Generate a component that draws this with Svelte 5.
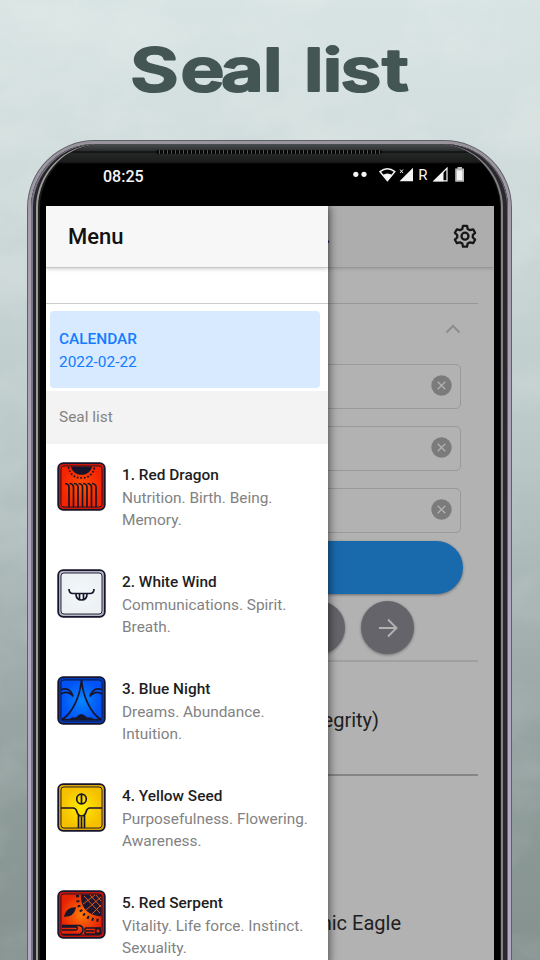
<script>
  const seals = [
    { kind: 'dragon', name: '1. Red Dragon', lines: ['Nutrition. Birth. Being.', 'Memory.'] },
    { kind: 'wind', name: '2. White Wind', lines: ['Communications. Spirit.', 'Breath.'] },
    { kind: 'night', name: '3. Blue Night', lines: ['Dreams. Abundance.', 'Intuition.'] },
    { kind: 'seed', name: '4. Yellow Seed', lines: ['Purposefulness. Flowering.', 'Awareness.'] },
    { kind: 'serpent', name: '5. Red Serpent', lines: ['Vitality. Life force. Instinct.', 'Sexuality.'] }
  ];
  const fields = [1, 2, 3];
  const tines = [10, 14.5, 19, 23.5, 28, 32.5, 37];
</script>

<div class="stage">
  <svg class="sky" width="540" height="960" aria-hidden="true">
    <filter id="cloud" x="0" y="0" width="100%" height="100%">
      <feTurbulence type="fractalNoise" baseFrequency="0.012 0.016" numOctaves="4" seed="8" />
      <feColorMatrix values="0 0 0 0 1  0 0 0 0 1  0 0 0 0 1  1.3 0 0 0 -0.52" />
    </filter>
    <rect width="540" height="960" filter="url(#cloud)" opacity="0.25" />
  </svg>

  <header class="title">
    <svg width="320" height="90" viewBox="0 0 320 90">
      <text transform="scale(1.26 1)" x="4.2 44 76.2 109.5 125 142 157 171 204.2" y="55">Seal list</text>
    </svg>
  </header>

  <div class="phone">
    <div class="bezel">
      <div class="inner">
        <div class="speaker"></div>
        <div class="status">
          <span class="clock">08:25</span>
          <svg width="120" height="20" viewBox="350 165 120 20" fill="#f4f4f4">
            <circle cx="355.800" cy="174.300" r="2.600" /><circle cx="364" cy="174.300" r="2.600" />
            <path d="M380 171.700Q387.400 165.700 394.800 171.700L387.400 180.500Z" fill="none" stroke="#f4f4f4" stroke-width="1.500" />
            <path d="M382.600 175Q387.400 171.800 392.200 175L387.400 181Z" />
            <path d="M399.500 181.200L413 167.800V181.200Z" /><path d="M400 169.500l3 3.500m0-3.500l-3 3.500" stroke="#f4f4f4" stroke-width="1" />
            <text x="418.300" y="180" class="roam">R</text>
            <path d="M434 180.900L447 168.200V180.900Z" fill="none" stroke="#f4f4f4" stroke-width="1.200" /><path d="M433.500 181.200L443.500 171.400V181.200Z" />
            <path d="M457.500 167h4.500v1.500h2v13.200h-8.800v-13.200h2.300z" fill="#bbb" /><rect x="457" y="170.500" width="5.200" height="9.500" />
          </svg>
        </div>

        <div class="screen">
          <main class="page">
            <div class="toolbar">
              <span class="name">.</span>
              <svg width="24" height="24" viewBox="0 0 24 24" fill="none" stroke="#171717" stroke-width="2.300" stroke-linejoin="round">
                <path d="M10 1.800h4l.7 3.100 2.300 1.300 3.100-.9 2 3.500-2.300 2.200v2.500l2.300 2.200-2 3.500-3.100-.9-2.300 1.300-.7 3.100h-4l-.7-3.100L7 18.300l-3.100.9-2-3.500 2.300-2.200V11L1.900 8.800l2-3.500 3.100.9 2.300-1.300z" />
                <circle cx="12" cy="12.200" r="3.500" />
              </svg>
            </div>
            <div class="body">
              <div class="accordion">
                <svg width="16" height="10" viewBox="0 0 16 10"><path d="M1.500 8.500L8 2l6.500 6.500" fill="none" stroke="#8d8d8d" stroke-width="2" /></svg>
              </div>
              {#each fields as f (f)}
                <div class="field">
                  <svg width="21" height="21" viewBox="0 0 21 21"><circle cx="10.500" cy="10.500" r="10.200" fill="#7b7b7b" /><path d="M6.700 6.700l7.600 7.600m0-7.600l-7.600 7.600" stroke="#b2b2b2" stroke-width="1.300" /></svg>
                </div>
              {/each}
              <div class="primary"></div>
              <div class="rounds">
                <div class="round"></div>
                <div class="round">
                  <svg width="20" height="20" viewBox="0 0 20 20" fill="none" stroke="#b2b2b2" stroke-width="1.900"><path d="M1 10h17M10 1.500l8.500 8.500-8.500 8.500" /></svg>
                </div>
              </div>
              <div class="result">tegrity)</div>
              <div class="eagle">mic Eagle</div>
            </div>
          </main>

          <nav class="drawer">
            <div class="menu-head">Menu</div>
            <div class="spacer"></div>
            <div class="calendar"><b>CALENDAR</b><span>2022-02-22</span></div>
            <div class="divider">Seal list</div>
            <ul>
              {#each seals as seal (seal.kind)}
                <li>
                  <svg class="seal" width="49" height="49" viewBox="0 0 49 49" fill="none" stroke="#17152c" stroke-width="1.700">
                    <defs>
                      <radialGradient id="g-{seal.kind}">
                        {#if seal.kind === 'wind'}
                          <stop offset="0" stop-color="#f3f8fa" /><stop offset="1" stop-color="#edf1f4" />
                        {:else if seal.kind === 'night'}
                          <stop offset="0" stop-color="#0786ff" /><stop offset="1" stop-color="#0052f4" />
                        {:else if seal.kind === 'seed'}
                          <stop offset="0" stop-color="#ffec00" /><stop offset="1" stop-color="#f5c000" />
                        {:else if seal.kind === 'serpent'}
                          <stop offset="0" stop-color="#ff7a08" /><stop offset="1" stop-color="#e62405" />
                        {:else}
                          <stop offset="0" stop-color="#ff5200" /><stop offset="1" stop-color="#f52400" />
                        {/if}
                      </radialGradient>
                    </defs>
                    <rect class="rim {seal.kind}" x="1.200" y="1.200" width="46.600" height="46.600" rx="5" stroke-width="1.800" />
                    <rect x="4" y="4" width="41" height="41" rx="3" fill="url(#g-{seal.kind})" stroke-width="0.900" />
                    {#if seal.kind === 'dragon'}
                      <path d="M14 4.500h21c-1 5-5 8.300-10.500 8.300S15 9.500 14 4.500z" fill="#17152c" stroke="none" />
                      <path d="M11.500 5c1 7 6 11 13 11s12-4 13-11" stroke-dasharray="1.700 1.800" />
                      {#each tines as x (x)}<path d="M{x - 2} 21.500q4 .5 4 3.500v20" />{/each}
                    {:else if seal.kind === 'wind'}
                      <path d="M12 20q0 4.500 4 4.500h17q4 0 4-4.500M19 25q0 6 5.500 6t5.500-6M22.500 25v5.500M26.500 25v5.500" />
                    {:else if seal.kind === 'night'}
                      <path d="M24.500 4C23 20 16 36 6 43M24.500 4C26 20 33 36 43 43M4 13.500q9-3 12 7M4 18q7-4 12 2.500M45 13.500q-9-3-12 7M45 18q-7-4-12 2.500" />
                      <path d="M5 44.500v-3q6 3 10 0h4q5-7 11 0h4q4 3 10 0v3z" fill="#17152c" stroke="none" />
                    {:else if seal.kind === 'seed'}
                      <circle cx="24.500" cy="16" r="4.800" /><path d="M24.500 11v10M4 25h12q3 0 4 4t4.500 4 4.500-4 4-4h12M21.500 32v13M24.500 34v11M27.500 32v13" />
                    {:else}
                      <path d="M24 4.500q-1 20 20.500 22v-22z" fill="#20162e" stroke="none" />
                      <path d="M27 6l16 17M33 5l11 12M39 5l5 6M26 14l12-9M29 20L44 7M35 24l9-9" stroke="#db5714" stroke-width="1" />
                      <path d="M20.500 5q0 25 24 25.500" stroke-width="3" stroke-dasharray="2 3" />
                      <path d="M8 26q2-8 10-8-2 8-10 8z" fill="#17152c" />
                      <path d="M5 35.500h18q3 1 3 4t-3 5H5M5 40h14q3-2 0-3H5M28 38h16M28 44h16M28 38v6M29 41h8" stroke-width="1.400" />
                      <circle cx="41" cy="41" r="2.500" />
                    {/if}
                  </svg>
                  <div class="copy">
                    <h3>{seal.name}</h3>
                    {#each seal.lines as line (line)}<p>{line}</p>{/each}
                  </div>
                </li>
              {/each}
            </ul>
          </nav>
        </div>
      </div>
    </div>
  </div>
</div>

<style>
  :global(body) { margin: 0; }
  .stage {
    position: relative; width: 540px; height: 960px; overflow: hidden; box-sizing: border-box;
    font-family: Roboto, 'Noto Sans', sans-serif;
    background: linear-gradient(180deg, #d8e4e3 0, #d3dfde 120px, #cad6d6 260px, #bac8c8 450px, #a2afae 640px, #8d9b99 800px, #84918f 960px);
  }
  .sky { position: absolute; inset: 0; }
  .title { position: relative; height: 140px; padding: 36px 0 0 125px; box-sizing: border-box; }
  .title text { font: 600 59px Inter, sans-serif; fill: #445654; stroke: #445654; stroke-width: 2.200px; stroke-linejoin: round; }
  .phone {
    position: relative; width: 485px; height: 900px; margin-left: 27px; padding: 1px 1px 0; box-sizing: border-box;
    border-radius: 68px 68px 0 0; background: #5d6066;
  }
  .bezel { height: 100%; padding: 3px 3px 0; box-sizing: border-box; border-radius: 67px 67px 0 0; background: linear-gradient(180deg, #99949b 0, #a69eab 80px, #b3abc4 500px); }
  .inner {
    height: 100%; padding: 0 14px 0 15px; box-sizing: border-box; border-radius: 64px 64px 0 0;
    background: linear-gradient(180deg, #4b4e50 0, #292b2c 7px, #050505 8px, #252727 9px, #1b1c1c 18px, #000 20px);
    box-shadow:
      inset 2px 0 #777585, inset 5px 0 #26262a, inset 7px 0 #9c9c99, inset 9px 0 #1d1d1d,
      inset -1px 0 #68667a, inset -5px 0 #29292d, inset -7px 0 #858285, inset -8px 0 #1d1d1d;
  }
  .speaker { width: 226px; height: 4px; margin: 0 auto; transform: translate(-1px, 6px); border-radius: 2px; background: repeating-linear-gradient(90deg, #070707 0 3px, #505354 3px 4px); }
  .status { height: 58px; display: flex; justify-content: space-between; padding: 17px 24px 0 57px; box-sizing: border-box; color: #f5f5f5; }
  .clock { font-size: 16px; font-weight: 500; line-height: 23px; }
  .roam { font: 400 15px Roboto, sans-serif; }
  .screen { position: relative; width: 448px; height: 760px; overflow: hidden; background: #b2b2b2; }
  .toolbar { height: 62px; display: flex; align-items: center; justify-content: space-between; padding: 0 17px 1px 279px; box-sizing: border-box; background: #adadad; border-bottom: 1px solid #969696; box-shadow: 0 1px 3px #8888; }
  .name { font-size: 20px; font-weight: 500; color: #222; }
  .body { padding: 35px 16px 0 0; }
  .accordion { height: 61px; display: flex; justify-content: flex-end; padding: 20px 17px 0 0; box-sizing: border-box; border-top: 1px solid #979797; }
  .accordion svg { flex: none; }
  .field { height: 45px; margin: 0 17px 17px 20px; padding: 0 8px 2px 0; box-sizing: border-box; display: flex; align-items: center; justify-content: flex-end; border: 1px solid #999; border-radius: 5px; }
  .primary { height: 53px; margin: -9px 15px 0 20px; border-radius: 27px; background: #186aad; box-shadow: 0 1px 3px #0006; }
  .rounds { height: 68px; padding: 7px 64px 0 0; box-sizing: border-box; display: flex; justify-content: flex-end; gap: 16px; border-bottom: 2px solid #a0a0a0; }
  .round { width: 53px; height: 53px; border-radius: 50%; display: grid; place-items: center; background: #65646a; box-shadow: 0 1px 3px #0006; }
  .result, .eagle { font-size: 20px; line-height: 24px; color: #202020; box-sizing: border-box; }
  .result { height: 114px; padding: 46px 99px 0 0; border-bottom: 2px solid #858585; text-align: right; }
  .eagle { padding: 135px 77px 0 0; text-align: right; }
  .drawer { position: absolute; inset: 0 auto 0 0; width: 282px; background: white; box-shadow: 1px 0 9px #0009; }
  .menu-head { position: relative; height: 62px; padding-left: 22px; box-sizing: border-box; font-size: 22px; font-weight: 500; line-height: 61px; color: #111; background: #f7f7f7; border-bottom: 1px solid #c7c7c7; box-shadow: 0 1px 4px #0003; }
  .spacer { height: 36px; box-sizing: border-box; border-bottom: 1px solid #ccc; }
  .calendar { height: 77px; margin: 7px 8px 3px 4px; padding: 17px 9px; box-sizing: border-box; display: flex; flex-direction: column; border-radius: 4px; background: #d7eaff; color: #147cff; font-size: 15.400px; line-height: 22.500px; }
  b { font-weight: 500; }
  .divider { height: 53px; padding-left: 13px; background: #f3f3f3; color: #838383; font-size: 15.400px; line-height: 53px; }
  ul { list-style: none; margin: 0; padding: 0; }
  li { height: 107px; display: flex; padding: 18px 0 0 11px; gap: 16px; box-sizing: border-box; }
  .seal { flex: none; }
  .copy { padding-top: 2px; white-space: nowrap; }
  h3, p { margin: 0; font-size: 15.400px; line-height: 22px; }
  h3 { font-weight: 500; line-height: 23px; color: #1e1e1e; }
  p { color: #828282; }
  .rim.dragon { fill: #cd1705; } .rim.wind { fill: #b4b6c1; } .rim.night { fill: #003bbd; } .rim.seed { fill: #dba700; } .rim.serpent { fill: #c51708; }
</style>
